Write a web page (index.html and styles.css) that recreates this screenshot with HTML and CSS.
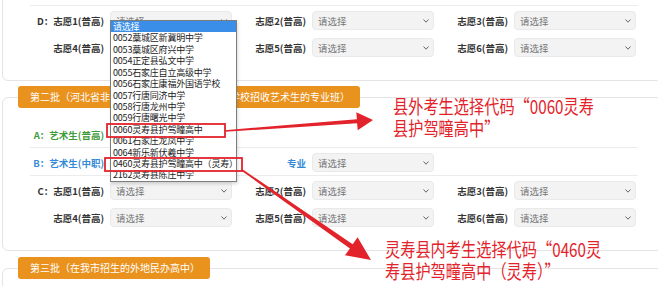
FILE: index.html
```html
<!DOCTYPE html>
<html lang="zh-CN">
<head>
    <meta charset="UTF-8">
    <title>志愿填报</title>
    <link rel="stylesheet" href="styles.css">
</head>
<body>
    <div class="card card-top">
        <div class="group">
            <div class="lbl">D：志愿1(普高)</div>
            <div class="sel">
                <span>请选择</span>
                <svg width="6" height="4" viewBox="0 0 6 4"><path d="M.5.5 3 3.2 5.5.5" fill="none" stroke="#666"/></svg>
                <ul class="dropdown">
                    <li class="on">请选择</li>
                    <li>0052藁城区新冀明中学</li>
                    <li>0053藁城区府兴中学</li>
                    <li>0054正定县弘文中学</li>
                    <li>0055石家庄自立高级中学</li>
                    <li>0056石家庄康福外国语学校</li>
                    <li>0057行唐同济中学</li>
                    <li>0058行唐龙州中学</li>
                    <li>0059行唐曙光中学</li>
                    <li>0060灵寿县护驾疃高中</li>
                    <li>0061石家庄龙凤中学</li>
                    <li>0064新乐新伏羲中学</li>
                    <li>0460灵寿县护驾疃高中（灵寿）</li>
                    <li>2162灵寿县陈庄中学</li>
                </ul>
            </div>
            <div class="lbl">志愿2(普高)</div>
            <div class="sel"><span>请选择</span><svg width="6" height="4" viewBox="0 0 6 4"><path d="M.5.5 3 3.2 5.5.5" fill="none" stroke="#666"/></svg></div>
            <div class="lbl">志愿3(普高)</div>
            <div class="sel"><span>请选择</span><svg width="6" height="4" viewBox="0 0 6 4"><path d="M.5.5 3 3.2 5.5.5" fill="none" stroke="#666"/></svg></div>
            <div class="lbl">志愿4(普高)</div>
            <div class="sel"><span>请选择</span><svg width="6" height="4" viewBox="0 0 6 4"><path d="M.5.5 3 3.2 5.5.5" fill="none" stroke="#666"/></svg></div>
            <div class="lbl">志愿5(普高)</div>
            <div class="sel"><span>请选择</span><svg width="6" height="4" viewBox="0 0 6 4"><path d="M.5.5 3 3.2 5.5.5" fill="none" stroke="#666"/></svg></div>
            <div class="lbl">志愿6(普高)</div>
            <div class="sel"><span>请选择</span><svg width="6" height="4" viewBox="0 0 6 4"><path d="M.5.5 3 3.2 5.5.5" fill="none" stroke="#666"/></svg></div>
        </div>
    </div>

    <div class="card">
        <div class="batch">第二批（河北省非省级示范性高中的普通高中学校招收艺术生的专业班）</div>
        <div class="group group-first">
            <div class="lbl green">A：艺术生(普高)</div>
            <div class="sel"><span>请选择</span><svg width="6" height="4" viewBox="0 0 6 4"><path d="M.5.5 3 3.2 5.5.5" fill="none" stroke="#666"/></svg></div>
        </div>
        <div class="group">
            <div class="lbl blue">B：艺术生(中职)</div>
            <div class="sel"><span>请选择</span><svg width="6" height="4" viewBox="0 0 6 4"><path d="M.5.5 3 3.2 5.5.5" fill="none" stroke="#666"/></svg></div>
            <div class="lbl blue">专业</div>
            <div class="sel"><span>请选择</span><svg width="6" height="4" viewBox="0 0 6 4"><path d="M.5.5 3 3.2 5.5.5" fill="none" stroke="#666"/></svg></div>
        </div>
        <div class="group">
            <div class="lbl">C：志愿1(普高)</div>
            <div class="sel"><span>请选择</span><svg width="6" height="4" viewBox="0 0 6 4"><path d="M.5.5 3 3.2 5.5.5" fill="none" stroke="#666"/></svg></div>
            <div class="lbl">志愿2(普高)</div>
            <div class="sel"><span>请选择</span><svg width="6" height="4" viewBox="0 0 6 4"><path d="M.5.5 3 3.2 5.5.5" fill="none" stroke="#666"/></svg></div>
            <div class="lbl">志愿3(普高)</div>
            <div class="sel"><span>请选择</span><svg width="6" height="4" viewBox="0 0 6 4"><path d="M.5.5 3 3.2 5.5.5" fill="none" stroke="#666"/></svg></div>
            <div class="lbl">志愿4(普高)</div>
            <div class="sel"><span>请选择</span><svg width="6" height="4" viewBox="0 0 6 4"><path d="M.5.5 3 3.2 5.5.5" fill="none" stroke="#666"/></svg></div>
            <div class="lbl">志愿5(普高)</div>
            <div class="sel"><span>请选择</span><svg width="6" height="4" viewBox="0 0 6 4"><path d="M.5.5 3 3.2 5.5.5" fill="none" stroke="#666"/></svg></div>
            <div class="lbl">志愿6(普高)</div>
            <div class="sel"><span>请选择</span><svg width="6" height="4" viewBox="0 0 6 4"><path d="M.5.5 3 3.2 5.5.5" fill="none" stroke="#666"/></svg></div>
        </div>
    </div>

    <div class="card card-last">
        <div class="batch">第三批（在我市招生的外地民办高中）</div>
    </div>

    <!-- 标注 -->
    <svg class="marks" width="658" height="286" viewBox="0 0 658 286">
        <g fill="none" stroke="#e3232b" stroke-width="1.8">
            <rect x="107" y="124" width="118" height="13"/>
            <rect x="105" y="158" width="137" height="13"/>
        </g>
        <g fill="#e3232b">
            <polygon points="224.9,130.2 356.9,119.2 356.3,112.2 373,120 357.7,130.2 357.1,123.2 225.1,131.8"/>
            <polygon points="242.5,169.3 352.7,244.2 357.6,237.3 371,260 345,255.3 349.9,248.4 241.5,170.7"/>
        </g>
    </svg>
    <div class="note note-out">县外考生选择代码“0060灵寿<br>县护驾疃高中”</div>
    <div class="note note-in">灵寿县内考生选择代码“0460灵<br>寿县护驾疃高中（灵寿）”</div>
</body>
</html>
```

FILE: styles.css
```css
html, body {
    margin: 0;
    overflow: hidden;
    background: #fff;
}

body {
    font-family: "Noto Sans CJK SC", "Noto Sans", sans-serif;
    font-size: 9.5px;
    color: #333;
}

.card {
    margin: 17px -4px 0 2px;
    border: 1px solid #e4e4e4;
    border-radius: 6px;
    padding: 0 23px 20px 27px;
}

.card-top {
    margin-top: -20px;
    padding-top: 24px;
}

.card-top + .card {
    margin-top: 16px;
}

.card-last {
    height: 10px;
}

.batch {
    width: fit-content;
    height: 22px;
    line-height: 22px;
    margin: -12px 0 0 -12px;
    padding: 0 10px 0 12px;
    background: #e9921e;
    color: #fff;
    font-size: 10px;
    border-radius: 3px;
    white-space: nowrap;
}

.group {
    display: grid;
    grid-template-columns: repeat(3, 80px 122px);
    row-gap: 8px;
    align-items: center;
    padding: 5px 0 3px;
    border-top: 1px solid #ececec;
}

.group-first {
    border-top: 0;
    padding-top: 17px;
}

.lbl {
    text-align: right;
    padding-right: 6px;
    font-weight: bold;
    white-space: nowrap;
}

.green {
    color: #3f9b3a;
}

.blue {
    color: #348ad6;
}

.sel {
    position: relative;
    height: 19px;
    box-sizing: border-box;
    display: flex;
    align-items: center;
    justify-content: space-between;
    padding: 0 4px 0 5px;
    background: #f3f3f3;
    border: 1px solid #e9e9e9;
    border-radius: 4px;
    color: #777;
}

.dropdown {
    position: absolute;
    top: 8px;
    left: -1px;
    z-index: 5;
    width: 127px;
    box-sizing: border-box;
    margin: 0;
    padding: 0;
    list-style: none;
    background: #fff;
    border: 1px solid #7d7d7d;
    box-shadow: 1px 2px 3px rgba(0, 0, 0, 0.15);
}

.dropdown li {
    height: 11.43px;
    line-height: 11.43px;
    padding-left: 2px;
    font-size: 9px;
    letter-spacing: -0.2px;
    color: #1a1a1a;
    white-space: nowrap;
}

.dropdown li.on {
    background: #3a8ee8;
    color: #fff;
}

.marks {
    position: absolute;
    top: 0;
    left: 0;
    z-index: 10;
    pointer-events: none;
}

.note {
    position: absolute;
    z-index: 10;
    color: #e3232b;
    font-size: 19px;
    line-height: 22px;
    white-space: nowrap;
    transform: scaleX(0.8);
    transform-origin: 0 0;
}

.note-out {
    left: 393px;
    top: 95px;
}

.note-in {
    left: 385px;
    top: 238px;
}
```
